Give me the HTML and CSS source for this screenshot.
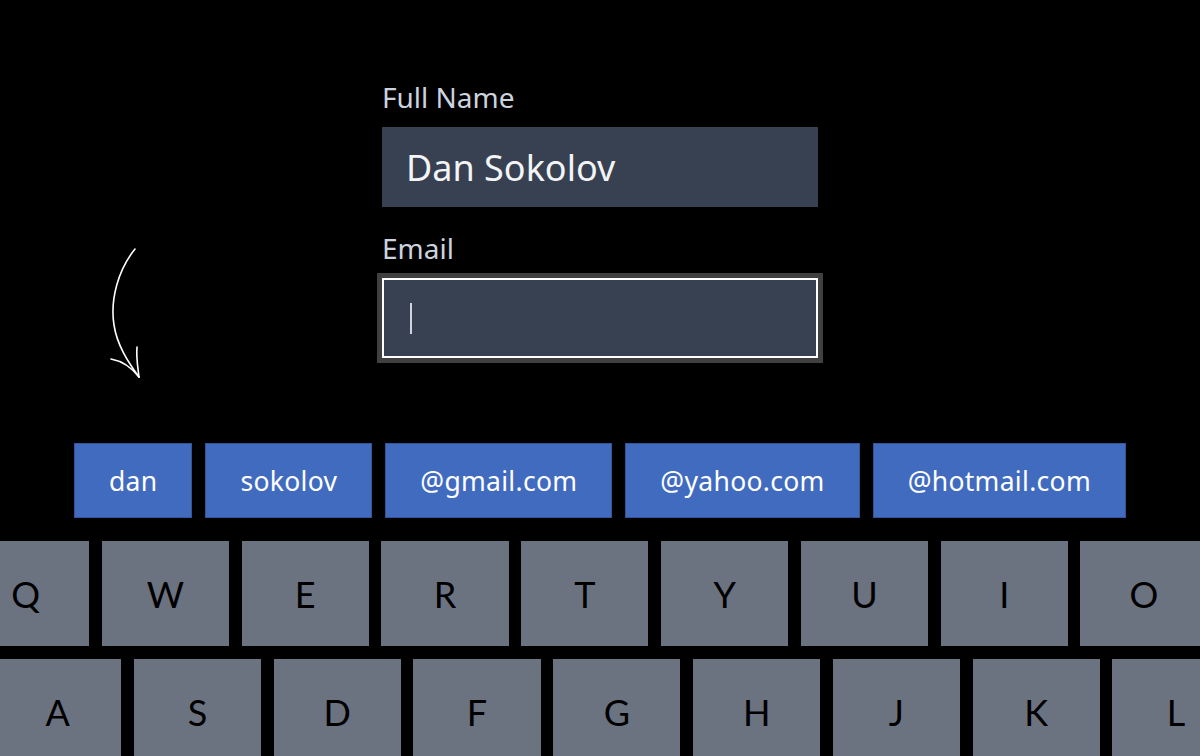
FILE: index.html
```html
<!DOCTYPE html>
<html>
<head>
    <title>Email autocomplete</title>
    <link rel="stylesheet" href="styles.css">
</head>
<body>
    <div class="screen">
        <!-- hand drawn hint arrow -->
        <svg class="hint-arrow" width="60" height="150" viewBox="0 0 60 150">
            <path d="M35 9 C 18 30, 10 60, 14 85 C 17 105, 28 122, 39 137" fill="none" stroke="#fff" stroke-width="1.6" stroke-linecap="round"/>
            <path d="M11 119 C 22 121, 32 128, 39 137" fill="none" stroke="#fff" stroke-width="1.6" stroke-linecap="round"/>
            <path d="M37 107 C 36 118, 38 128, 39 137" fill="none" stroke="#fff" stroke-width="1.6" stroke-linecap="round"/>
        </svg>

        <div class="form">
            <label class="field-label">Full Name</label>
            <div class="field">Dan Sokolov</div>

            <label class="field-label">Email</label>
            <div class="field field-active"><span class="caret"></span></div>
        </div>

        <div class="suggestions">
            <div class="chip">dan</div>
            <div class="chip">sokolov</div>
            <div class="chip">@gmail.com</div>
            <div class="chip">@yahoo.com</div>
            <div class="chip">@hotmail.com</div>
        </div>

        <div class="keyboard">
            <div class="key-row row-top">
                <div class="key">Q</div>
                <div class="key">W</div>
                <div class="key">E</div>
                <div class="key">R</div>
                <div class="key">T</div>
                <div class="key">Y</div>
                <div class="key">U</div>
                <div class="key">I</div>
                <div class="key">O</div>
            </div>
            <div class="key-row row-home">
                <div class="key">A</div>
                <div class="key">S</div>
                <div class="key">D</div>
                <div class="key">F</div>
                <div class="key">G</div>
                <div class="key">H</div>
                <div class="key">J</div>
                <div class="key">K</div>
                <div class="key">L</div>
            </div>
        </div>
    </div>
</body>
</html>
```

FILE: styles.css
```css
body {
    margin: 0;
    background: #000;
    font-family: "Noto Sans", "Open Sans", sans-serif;
}
.screen {
    position: relative;
    width: 1200px;
    height: 756px;
    overflow: hidden;
}
.hint-arrow {
    position: absolute;
    left: 100px;
    top: 240px;
}
.form {
    display: flex;
    flex-direction: column;
    width: 436px;
    margin-left: 382px;
    padding-top: 78px;
}
.field-label {
    color: #cdd3de;
    font-size: 28px;
    line-height: 38px;
    margin-bottom: 11px;
}
.field {
    box-sizing: border-box;
    height: 80px;
    background: #374151;
    color: #f3f4f6;
    font-size: 36px;
    display: flex;
    align-items: center;
    padding-left: 24px;
    margin-bottom: 22px;
}
.field-active {
    border: 2px solid #fff;
    box-shadow: 0 0 0 5px #404040;
    padding-left: 26px;
    margin-bottom: 0;
}
.caret {
    width: 2px;
    height: 31px;
    background: #d1d5db;
}
.suggestions {
    display: flex;
    gap: 13px;
    margin-left: 74px;
    margin-top: 85px;
}
.chip {
    box-sizing: border-box;
    height: 75px;
    padding: 0 34px;
    background: #416bbf;
    border: 1px solid #35559a;
    color: #fff;
    font-size: 26.5px;
    letter-spacing: 0.3px;
    display: flex;
    align-items: center;
}
.keyboard {
    margin-top: 23px;
    display: flex;
    flex-direction: column;
    gap: 13px;
}
.key-row {
    display: flex;
    gap: 12.5px;
}
.row-top { margin-left: -38px; }
.row-home { margin-left: -6px; }
.key {
    flex: none;
    width: 127.3px;
    height: 105px;
    background: #6b7280;
    color: #000;
    font-family: "Lato", sans-serif;
    font-size: 36px;
    display: flex;
    align-items: center;
    justify-content: center;
}
```
